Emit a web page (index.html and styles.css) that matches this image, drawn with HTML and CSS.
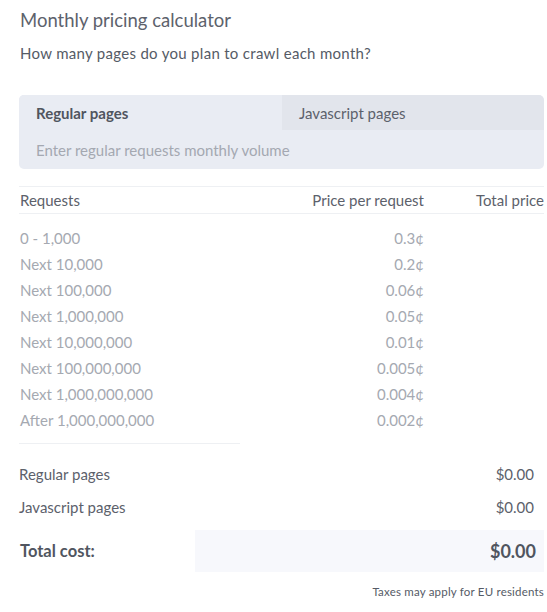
FILE: index.html
```html
<!DOCTYPE html>
<html lang="en">
<head>
<meta charset="utf-8">
<title>Monthly pricing calculator</title>
<link rel="stylesheet" href="styles.css">
</head>
<body>
<div class="calc">
  <h2 class="title">Monthly pricing calculator</h2>
  <p class="subtitle">How many pages do you plan to crawl each month?</p>

  <div class="panel">
    <div class="tabs">
      <div class="tab active">Regular pages</div>
      <div class="tab">Javascript pages</div>
    </div>
    <div class="input-row">
      <input class="volume" type="text" placeholder="Enter regular requests monthly volume">
    </div>
  </div>

  <table class="tiers">
    <thead>
      <tr><th class="c-req">Requests</th><th class="c-price">Price per request</th><th class="c-total">Total price</th></tr>
    </thead>
    <tbody>
      <tr><td>0 - 1,000</td><td class="num">0.3¢</td><td></td></tr>
      <tr><td>Next 10,000</td><td class="num">0.2¢</td><td></td></tr>
      <tr><td>Next 100,000</td><td class="num">0.06¢</td><td></td></tr>
      <tr><td>Next 1,000,000</td><td class="num">0.05¢</td><td></td></tr>
      <tr><td>Next 10,000,000</td><td class="num">0.01¢</td><td></td></tr>
      <tr><td>Next 100,000,000</td><td class="num">0.005¢</td><td></td></tr>
      <tr><td>Next 1,000,000,000</td><td class="num">0.004¢</td><td></td></tr>
      <tr><td>After 1,000,000,000</td><td class="num">0.002¢</td><td></td></tr>
    </tbody>
  </table>
  <div class="divider"></div>

  <div class="summary">
    <div class="sum-row"><span>Regular pages</span><span>$0.00</span></div>
    <div class="sum-row"><span>Javascript pages</span><span>$0.00</span></div>
    <div class="total-row">
      <span class="total-label">Total cost:</span>
      <span class="total-box"><span class="total-value">$0.00</span></span>
    </div>
  </div>
  <p class="note">Taxes may apply for EU residents</p>
</div>
</body>
</html>
```
FILE: styles.css
```css
* { box-sizing: border-box; }
html, body { margin: 0; padding: 0; background: #ffffff; }
body {
  font-family: Lato, "Open Sans", "Liberation Sans", sans-serif;
  color: #555b66;
}
.calc {
  width: 525px;
  margin-left: 19px;
  padding-top: 8px;
}
.title {
  margin: 0 0 0 1px;
  font-size: 18.5px;
  font-weight: 400;
  line-height: 24px;
  color: #5d626c;
}
.subtitle {
  margin: 9px 0 0 1px;
  font-size: 15px;
  line-height: 24px;
  letter-spacing: 0.3px;
  color: #555b66;
}
.panel {
  margin-top: 30px;
  background: #e9ecf3;
  border-radius: 5px;
  overflow: hidden;
}
.tabs {
  display: grid;
  grid-template-columns: 263px 1fr;
  height: 35px;
}
.tab {
  display: flex;
  align-items: center;
  padding-left: 17px;
  font-size: 15px;
  color: #5c616b;
  background: #e2e5ec;
  border-radius: 0 5px 0 0;
}
.tab.active {
  background: #e9ecf3;
  font-weight: 700;
  color: #50555f;
  border-radius: 0;
}
.input-row {
  height: 39px;
  display: flex;
  align-items: center;
  padding-left: 17px;
}
.volume {
  border: none;
  background: transparent;
  outline: none;
  padding: 0;
  width: 100%;
  font-family: inherit;
  font-size: 15px;
  color: #555b66;
}
.volume::placeholder { color: #a4a8b1; }

.tiers {
  margin-top: 17px;
  width: 100%;
  border-collapse: collapse;
  font-size: 15px;
}
.tiers thead tr {
  border-top: 1px solid #eef0f3;
  border-bottom: 1px solid #eef0f3;
}
.tiers th {
  font-weight: 400;
  color: #5c616b;
  height: 27px;
  padding: 0;
  text-align: left;
}
.tiers th.c-req { padding-left: 1px; }
.tiers th.c-price { text-align: right; width: 170px; }
.tiers th.c-total { text-align: right; width: 120px; }
.tiers td {
  height: 26px;
  padding: 0 0 0 1px;
  color: #a5a9b1;
}
.tiers tbody tr:first-child td {
  height: 37px;
  padding-top: 11px;
}
.tiers td.num { text-align: right; }
.divider {
  width: 221px;
  height: 1px;
  margin-top: 10px;
  background: #eef0f3;
}
.summary { margin-top: 14px; }
.sum-row {
  display: flex;
  justify-content: space-between;
  height: 33px;
  align-items: center;
  font-size: 15px;
  color: #5c616b;
  padding-right: 10px;
}
.total-row {
  display: flex;
  align-items: center;
  height: 42px;
  margin-top: 6px;
}
.total-label {
  width: 176px;
  padding-left: 1px;
  font-size: 16.5px;
  font-weight: 700;
  color: #50555f;
}
.total-box {
  flex: 1;
  height: 42px;
  background: #f7f8fc;
  display: flex;
  align-items: center;
  justify-content: flex-end;
  padding-right: 8px;
}
.total-value {
  font-size: 18px;
  font-weight: 700;
  color: #50555f;
}
.note {
  margin: 13px 0 0;
  text-align: right;
  font-size: 11.5px;
  letter-spacing: 0.2px;
  color: #555b66;
}
```
